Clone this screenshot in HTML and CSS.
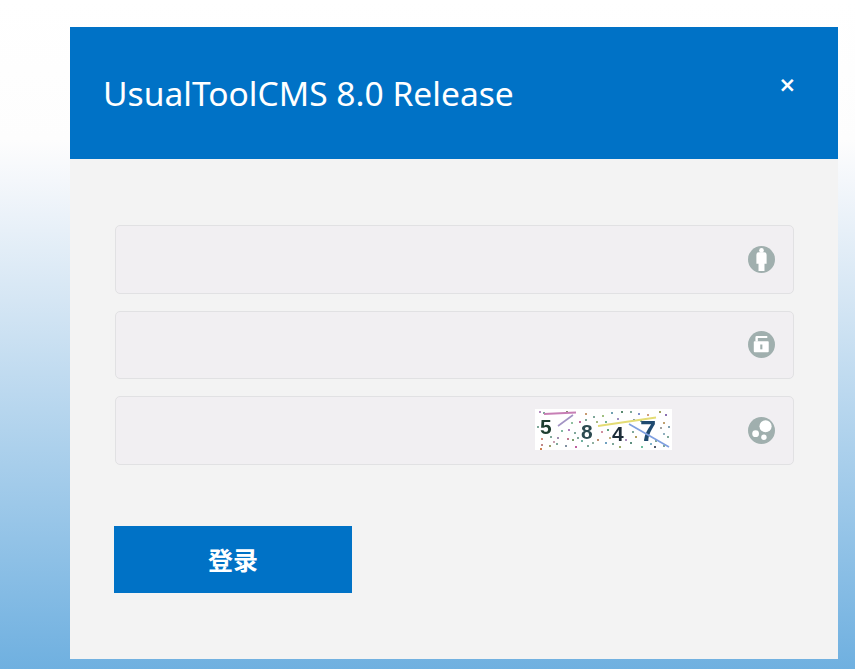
FILE: index.html
```html
<!DOCTYPE html>
<html lang="zh-CN">
<head>
  <meta charset="UTF-8">
  <title>UsualToolCMS 8.0 Release</title>
  <link rel="stylesheet" href="styles.css">
</head>
<body>
  <div class="dialog">
    <div class="dialog-header">
      <h1 class="dialog-title">UsualToolCMS 8.0 Release</h1>
      <span class="dialog-close">&times;</span>
    </div>
    <form class="login-form">
      <div class="field">
        <input type="text" class="field-input">
        <svg class="field-icon" viewBox="0 0 28 28">
          <circle cx="14" cy="14" r="14" fill="#a0afae"/>
          <circle cx="14" cy="4.600" r="2.400" fill="#fff"/>
          <path d="M8.700 9q0-2.500 2.500-2.500h5.600q2.500 0 2.500 2.500v9.500h-2.200v7.500h-6.200v-7.500h-2.200z" fill="#fff"/>
        </svg>
      </div>
      <div class="field">
        <input type="password" class="field-input">
        <svg class="field-icon" viewBox="0 0 28 28">
          <circle cx="14" cy="14" r="14" fill="#a0afae"/>
          <path d="M7.700 11v-4.500q0-1.300 1.300-1.300h11v2.100h-9.800v3.700z" fill="#fff"/>
          <rect x="6" y="10.500" width="15.500" height="11.500" rx="1" fill="#fff"/>
          <rect x="12.700" y="14" width="2.200" height="5" fill="#a0afae"/>
        </svg>
      </div>
      <div class="field">
        <input type="text" class="field-input">
        <svg class="captcha" viewBox="0 0 137 41" width="137" height="41">
          <rect width="137" height="41" fill="#fff"/>
          <g fill="#7fa89a">
            <rect x="4" y="2" width="2" height="2" fill="#b58ac0"/><rect x="8" y="3" width="2" height="2"/><rect x="31" y="2" width="2" height="2" fill="#8a8a70"/>
            <rect x="50" y="4" width="2" height="2" fill="#c89a70"/><rect x="58" y="7" width="2" height="2"/><rect x="67" y="6" width="2" height="2" fill="#a0c080"/>
            <rect x="76" y="3" width="2" height="2" fill="#70a0b0"/><rect x="86" y="2" width="2" height="2" fill="#5a8a70"/><rect x="95" y="2" width="2" height="2"/>
            <rect x="103" y="4" width="2" height="2" fill="#8090c8"/><rect x="112" y="5" width="2" height="2" fill="#d0a080"/><rect x="124" y="2" width="2" height="2" fill="#a0a060"/>
            <rect x="130" y="5" width="2" height="2" fill="#8a70b0"/><rect x="44" y="12" width="2" height="2" fill="#c06a9a"/><rect x="50" y="10" width="2" height="2"/>
            <rect x="70" y="12" width="2" height="2" fill="#70b090"/><rect x="82" y="9" width="2" height="2" fill="#a090c0"/><rect x="105" y="11" width="2" height="2"/>
            <rect x="128" y="13" width="2" height="2" fill="#c0a070"/><rect x="133" y="17" width="2" height="2" fill="#80a0b0"/><rect x="2" y="17" width="2" height="2"/>
            <rect x="26" y="21" width="2" height="2" fill="#80b8a0"/><rect x="33" y="20" width="2" height="2" fill="#b080c0"/><rect x="39" y="23" width="2" height="2"/>
            <rect x="66" y="22" width="2" height="2" fill="#d090a0"/><rect x="72" y="20" width="2" height="2" fill="#60a080"/><rect x="97" y="22" width="2" height="2"/>
            <rect x="100" y="27" width="2" height="2" fill="#b0a060"/><rect x="128" y="24" width="2" height="2" fill="#90b0c0"/><rect x="132" y="27" width="2" height="2"/>
            <rect x="6" y="29" width="2" height="2" fill="#d09080"/><rect x="15" y="27" width="2" height="2"/><rect x="22" y="28" width="2" height="2" fill="#a090b0"/>
            <rect x="32" y="29" width="2" height="2" fill="#c07890"/><rect x="37" y="30" width="2" height="2" fill="#80a070"/><rect x="42" y="28" width="2" height="2"/>
            <rect x="62" y="30" width="2" height="2" fill="#c09070"/><rect x="70" y="33" width="2" height="2" fill="#70a0c0"/><rect x="77" y="34" width="2" height="2"/>
            <rect x="95" y="33" width="2" height="2" fill="#609080"/><rect x="109" y="30" width="2" height="2" fill="#b0c080"/><rect x="120" y="31" width="2" height="2"/>
            <rect x="6" y="35" width="2" height="2" fill="#c08888"/><rect x="14" y="36" width="2" height="2" fill="#a0a070"/><rect x="21" y="34" width="2" height="2"/>
            <rect x="30" y="36" width="2" height="2" fill="#8090a0"/><rect x="40" y="37" width="2" height="2" fill="#c060a0"/><rect x="52" y="36" width="2" height="2"/>
            <rect x="57" y="33" width="2" height="2" fill="#90b0a0"/><rect x="84" y="37" width="2" height="2" fill="#a0b070"/><rect x="106" y="37" width="2" height="2" fill="#70c0a0"/>
            <rect x="119" y="37" width="2" height="2" fill="#505868"/><rect x="5" y="39" width="2" height="2" fill="#d08050"/><rect x="128" y="36" width="2" height="2"/>
            <rect x="18" y="32" width="2" height="2" fill="#c8a0b0"/><rect x="46" y="31" width="2" height="2" fill="#70b0a0"/><rect x="61" y="12" width="2" height="2" fill="#a8b880"/>
            <rect x="90" y="30" width="2" height="2" fill="#b090c0"/><rect x="115" y="34" width="2" height="2" fill="#80b0c8"/><rect x="125" y="18" width="2" height="2" fill="#a0a0a0"/>
            <rect x="36" y="13" width="2" height="2" fill="#90c0a0"/><rect x="74" y="28" width="2" height="2" fill="#c0b080"/><rect x="98" y="10" width="2" height="2" fill="#7090b0"/>
          </g>
          <line x1="9" y1="5" x2="41" y2="3.500" stroke="#c77fb5" stroke-width="2"/>
          <line x1="23" y1="17" x2="38" y2="6" stroke="#a394c4" stroke-width="1.600"/>
          <line x1="63" y1="17" x2="121" y2="8.500" stroke="#e4dc74" stroke-width="2"/>
          <text class="captcha-digit" x="5" y="25" fill="#1e3d30">5</text>
          <text class="captcha-digit" x="46" y="30" fill="#2c4a50">8</text>
          <text class="captcha-digit" x="77" y="32" fill="#1c2c38">4</text>
          <text class="captcha-digit captcha-digit-big" x="105" y="32" fill="#1f4a70">7</text>
          <line x1="94" y1="15" x2="134" y2="38" stroke="#7e9fe0" stroke-width="1.700"/>
        </svg>
        <svg class="field-icon" viewBox="0 0 28 28">
          <circle cx="14" cy="14" r="14" fill="#a0afae"/>
          <circle cx="18.200" cy="9.600" r="6.300" fill="#fff"/>
          <circle cx="7.900" cy="17.300" r="3.500" fill="#fff"/>
          <circle cx="16.500" cy="21" r="2.800" fill="#fff"/>
        </svg>
      </div>
      <button type="button" class="login-btn">登录</button>
    </form>
  </div>
</body>
</html>
```

FILE: styles.css
```css
html, body {
  height: 100%;
}

body {
  margin: 0;
  overflow: hidden;
  background: linear-gradient(to bottom, #fff 0, #fdfdfd 140px, #f4f7fb 180px, #d5e6f4 300px, #6fb0e0 669px);
  font-family: "Noto Sans", "Noto Sans CJK SC", sans-serif;
}

.dialog {
  width: 768px;
  height: 632px;
  margin: 27px 0 0 70px;
  background: #f3f3f3;
}

.dialog-header {
  height: 132px;
  padding: 0 42px 0 33px;
  box-sizing: border-box;
  display: flex;
  justify-content: space-between;
  align-items: center;
  background: #0072c6;
  color: #fff;
}

.dialog-title {
  margin: 0;
  font-size: 33.600px;
  font-weight: 400;
}

.dialog-close {
  margin-bottom: 15px;
  font-family: "DejaVu Sans", sans-serif;
  font-size: 21px;
  font-weight: 700;
  line-height: 1;
}

.login-form {
  padding: 66px 44px 0 44.500px;
  display: flex;
  flex-direction: column;
  gap: 17px;
}

.field {
  height: 68.500px;
  box-sizing: border-box;
  padding-right: 18.500px;
  display: flex;
  align-items: center;
  background: #f1eff2;
  border: 1.500px solid #e1e1e3;
  border-radius: 5px;
}

.field-input {
  flex: 1;
  min-width: 0;
  height: 100%;
  padding: 0 14px;
  background: transparent;
  border: none;
  outline: none;
}

.field-icon {
  width: 27px;
  height: 27px;
  filter: blur(0.6px);
}

.captcha {
  margin: 0 76px 1px 0;
  flex-shrink: 0;
  filter: blur(0.5px);
}

.captcha-digit {
  font-family: "Liberation Sans", sans-serif;
  font-size: 21px;
  font-weight: 700;
}

.captcha-digit-big {
  font-size: 29px;
}

.login-btn {
  width: 238px;
  height: 67px;
  margin: 44.500px 0 0 -0.500px;
  padding-bottom: 3px;
  background: #0072c6;
  color: #fff;
  border: none;
  font-family: "Noto Sans CJK SC", sans-serif;
  font-size: 25px;
  font-weight: 700;
}
```
